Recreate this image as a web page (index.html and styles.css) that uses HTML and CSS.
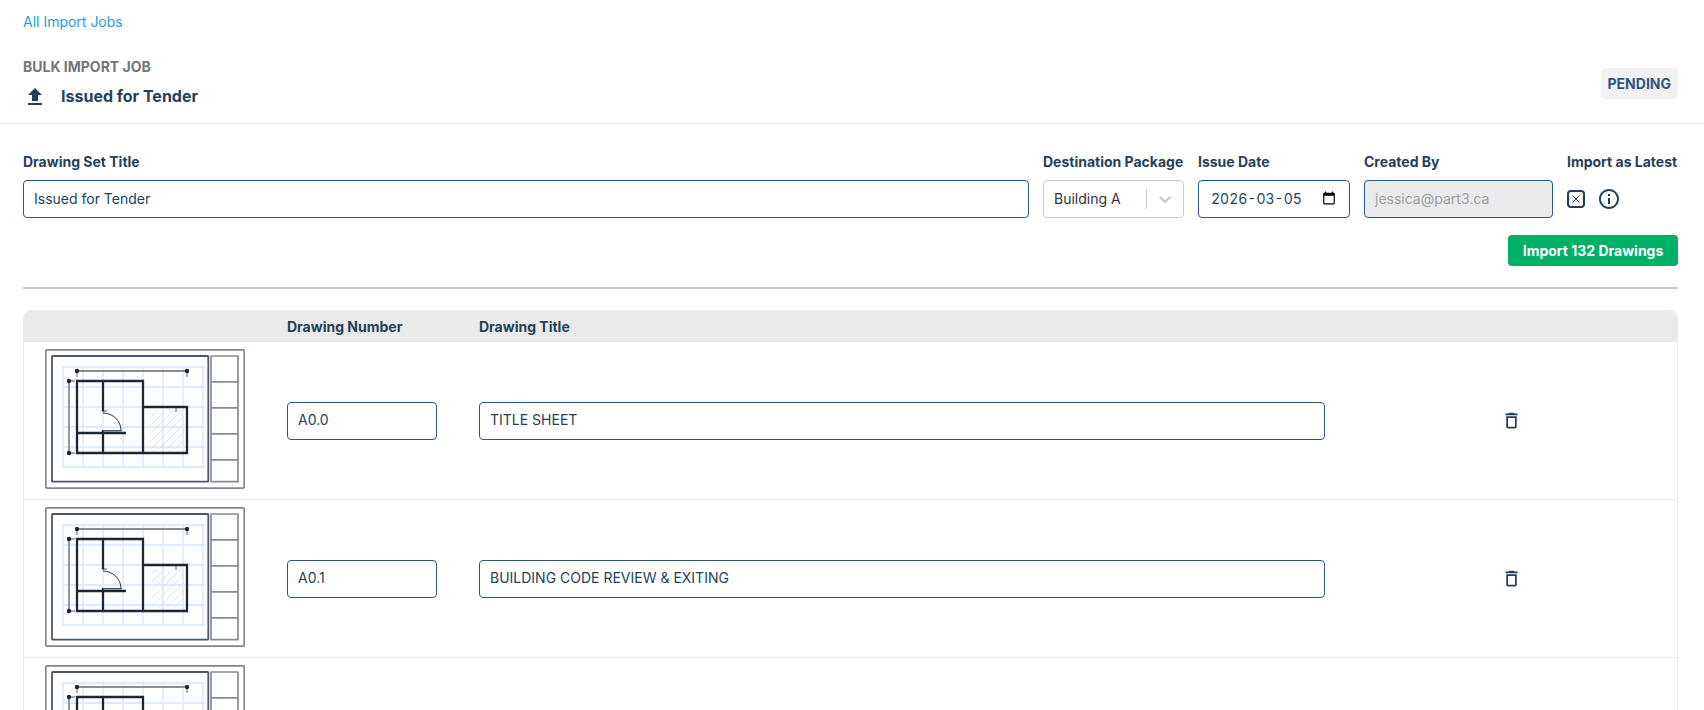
FILE: index.html
```html
<!DOCTYPE html>
<html lang="en">
<head>
<meta charset="utf-8">
<meta name="viewport" content="width=device-width, initial-scale=1">
<title>Issued for Tender</title>
<link rel="stylesheet" href="styles.css">
</head>
<body>
<svg class="sprite" aria-hidden="true">
  <defs>
    <symbol id="plan" viewBox="0 0 200 140">
      <g fill="none">
        <rect x="0.8" y="0.8" width="198.4" height="138.4" rx="1.5" stroke="#7f8590" stroke-width="1.7"/>
        <rect x="7" y="7" width="156.3" height="125.7" rx="0.6" stroke="#4f5563" stroke-width="1.8"/>
        <path d="M166 7h27v125.700h-27zM166 32.800h27M166 58.800h27M166 84.800h27M166 110.800h27" stroke="#878b93" stroke-width="1.7" stroke-linejoin="round"/>
        <path d="M18 17v102M38 17v102M58 17v102M78 17v102M98 17v102M118 17v102M138 17v102M158 17v102M17 18h143M17 38h143M17 58h143M17 78h143M17 98h143M17 118h143" stroke="#bfd7fb" stroke-opacity="0.5" stroke-width="1.8"/>
        <path d="M106 68l6-6M106 76l14-14M106 84l22-22M106 92l30-30M106 100l32-32M114 100l24-24M122 100l16-16M130 100l8-8" stroke="#d8d8d8" stroke-width="0.8"/>
        <path d="M32 22h110M24 32v72" stroke="#8b8f94" stroke-width="1.8"/>
        <path d="M32 22v6M142 22v6M24 32h6M24 104h6M131 58v5M58 62h4" stroke="#8b8f94" stroke-width="1.4"/>
        <path d="M32 32h66v26h44v46H32zM98 58v46M58 32v30.500M58 81v23M32 84h49" stroke="#1c2733" stroke-width="2.300"/>
        <path d="M58 81.700h18.500" stroke="#4d5660" stroke-width="1.6"/>
        <path d="M58 64c10 0 18 8 18 17.500" stroke="#2b3540" stroke-width="1"/>
      </g>
      <g fill="#1c2733">
        <circle cx="32" cy="22" r="2.2"/><circle cx="142" cy="22" r="2.2"/>
        <circle cx="24" cy="32" r="2.2"/><circle cx="24" cy="104" r="2.2"/>
      </g>
    </symbol>
    <symbol id="trash" viewBox="0 0 24 24">
      <path d="M6 19c0 1.100.900 2 2 2h8c1.100 0 2-.900 2-2V7H6zM8 9h8v10H8zm7.500-5-1-1h-5l-1 1H5v2h14V4z"/>
    </symbol>
  </defs>
</svg>

<nav class="crumbs"><a href="#">All Import Jobs</a></nav>

<header class="job-header">
  <div class="job-heading">
    <p class="eyebrow">BULK IMPORT JOB</p>
    <div class="job-name">
      <svg class="icon" viewBox="0 0 24 24" aria-hidden="true"><path d="M5 20h14v-2H5zm0-10h4v6h6v-6h4l-7-7z"/></svg>
      <h1>Issued for Tender</h1>
    </div>
  </div>
  <span class="status">PENDING</span>
</header>

<main class="content">
  <form class="job-form">
    <div class="fields">
      <div class="field field-grow">
        <label for="set-title">Drawing Set Title</label>
        <input class="input" id="set-title" type="text" value="Issued for Tender">
      </div>
      <div class="field field-package">
        <label for="package">Destination Package</label>
        <div class="select-wrap">
          <select id="package"><option>Building A</option></select>
          <span class="select-mark"><svg viewBox="0 0 20 20" aria-hidden="true"><path d="M4.516 7.548c0.436-0.446 1.043-0.481 1.576 0l3.908 3.747 3.908-3.747c0.533-0.481 1.141-0.446 1.574 0 0.436 0.445 0.408 1.197 0 1.615-0.406 0.418-4.695 4.502-4.695 4.502-0.217 0.223-0.502 0.335-0.787 0.335s-0.570-0.112-0.789-0.335c0 0-4.287-4.084-4.695-4.502s-0.436-1.170 0-1.615z"/></svg></span>
        </div>
      </div>
      <div class="field">
        <label for="issue-date">Issue Date</label>
        <div class="date-wrap">
          <input class="input input-date" id="issue-date" type="text" value="2026-03-05">
          <svg class="date-mark" viewBox="0 0 24 24" aria-hidden="true"><path d="M20 3h-1V1h-2v2H7V1H5v2H4c-1.100 0-2 .900-2 2v16c0 1.100.900 2 2 2h16c1.100 0 2-.900 2-2V5c0-1.100-.900-2-2-2zm0 18H4V8h16z"/></svg>
        </div>
      </div>
      <div class="field">
        <label for="created-by">Created By</label>
        <input class="input input-creator" id="created-by" type="text" value="jessica@part3.ca" disabled>
      </div>
      <div class="field field-latest">
        <label for="latest">Import as Latest</label>
        <div class="latest">
          <span class="check-wrap">
            <input id="latest" type="checkbox" checked>
            <svg class="check-mark" viewBox="0 0 8 8" aria-hidden="true"><path d="M0.500 0.500l7 7M7.500 0.500l-7 7"/></svg>
          </span>
          <svg class="icon" viewBox="0 0 24 24" aria-hidden="true"><path d="M11 7h2v2h-2zm0 4h2v6h-2zm1-9C6.480 2 2 6.480 2 12s4.480 10 10 10 10-4.480 10-10S17.520 2 12 2zm0 18c-4.410 0-8-3.590-8-8s3.590-8 8-8 8 3.590 8 8-3.590 8-8 8z"/></svg>
        </div>
      </div>
    </div>
    <button class="submit" type="button">Import 132 Drawings</button>
  </form>

  <hr class="rule">

  <div class="table-box">
    <table class="drawings">
      <thead>
        <tr><th class="col-image"></th><th class="col-number">Drawing Number</th><th>Drawing Title</th><th class="col-action"></th></tr>
      </thead>
      <tbody>
        <tr>
          <td class="image"><svg class="thumb" aria-hidden="true"><use href="#plan"/></svg></td>
          <td><input class="input" type="text" aria-label="Drawing Number" value="A0.0"></td>
          <td><input class="input" type="text" aria-label="Drawing Title" value="TITLE SHEET"></td>
          <td class="action"><button class="delete" type="button" aria-label="Delete"><svg aria-hidden="true"><use href="#trash"/></svg></button></td>
        </tr>
        <tr>
          <td class="image"><svg class="thumb" aria-hidden="true"><use href="#plan"/></svg></td>
          <td><input class="input" type="text" aria-label="Drawing Number" value="A0.1"></td>
          <td><input class="input" type="text" aria-label="Drawing Title" value="BUILDING CODE REVIEW &amp; EXITING"></td>
          <td class="action"><button class="delete" type="button" aria-label="Delete"><svg aria-hidden="true"><use href="#trash"/></svg></button></td>
        </tr>
        <tr>
          <td class="image"><svg class="thumb" aria-hidden="true"><use href="#plan"/></svg></td>
          <td><input class="input" type="text" aria-label="Drawing Number"></td>
          <td><input class="input" type="text" aria-label="Drawing Title"></td>
          <td class="action"><button class="delete" type="button" aria-label="Delete"><svg aria-hidden="true"><use href="#trash"/></svg></button></td>
        </tr>
      </tbody>
    </table>
  </div>
</main>
</body>
</html>
```
FILE: styles.css
```css
* { box-sizing: border-box; }

html { overflow: hidden; }

body {
  margin: 0;
  height: 100vh;
  overflow: hidden;
  background: #fff;
  color: #263f58;
  font: 14px/17px Inter, "Liberation Sans", sans-serif;
}

input, select, button { font: inherit; color: inherit; }

.sprite { position: absolute; width: 0; height: 0; }

.icon { display: block; width: 24px; height: 24px; fill: currentColor; }

.crumbs { padding: 13px 26px 15px 23px; }
.crumbs a { color: #1d9ed9; text-decoration: none; }

.job-header {
  display: flex;
  align-items: center;
  justify-content: space-between;
  padding: 13px 26px 14px 23px;
  border-bottom: 1px solid #eaeaea;
}
.job-heading { display: flex; flex-direction: column; gap: 10px; }
.eyebrow { margin: 0; color: #757575; font-weight: 700; }
.job-name { display: flex; align-items: flex-start; gap: 14px; }
.job-name h1 { margin: 0; font-size: 16px; line-height: 22px; font-weight: 700; }
.status {
  padding: 7px;
  border-radius: 4px;
  background: #f2f2f2;
  color: #2e5682;
  font-weight: 700;
}

.content { padding: 29px 26px 0 23px; }

.job-form { display: flex; flex-direction: column; gap: 17px; }
.fields { display: flex; gap: 14px; }
.field { display: flex; flex-direction: column; gap: 10px; }
.field-grow { flex: 1; }
.field-package { min-width: 141px; }
.field-latest { min-width: 111px; }
.field label { font-weight: 700; white-space: nowrap; }

.input {
  display: block;
  width: 100%;
  height: 38px;
  padding: 0 10px 2px;
  border: 1px solid #2e5682;
  border-radius: 4px;
  background: #fff;
}
.input:disabled { background: #eaeaea; color: #a0a0a0; }
.input-creator { width: 189px; }

.date-wrap { position: relative; width: 152px; }
.input-date { padding-left: 12px; font-variant-numeric: tabular-nums; }
.date-mark { position: absolute; top: 11px; right: 14px; width: 14px; height: 14px; fill: #000; }

.select-wrap { position: relative; }
.select-wrap select {
  display: block;
  width: 100%;
  height: 38px;
  padding: 0 38px 2px 10px;
  border: 1px solid #ccc;
  border-radius: 4px;
  background: #fff;
  color: #333;
  appearance: none;
}
.select-mark {
  position: absolute;
  top: 9px;
  right: 1px;
  display: flex;
  padding: 0 8px;
  border-left: 1px solid #ccc;
  pointer-events: none;
}
.select-mark svg { width: 20px; height: 20px; fill: #ccc; }

.latest { display: flex; align-items: center; gap: 12px; height: 37px; }
.check-wrap { position: relative; width: 18px; height: 18px; }
.check-wrap input {
  display: block;
  width: 18px;
  height: 18px;
  margin: 0;
  border: 2px solid #263f58;
  border-radius: 4px;
  background: #fff;
  appearance: none;
}
.check-mark {
  position: absolute;
  top: 5px;
  left: 5px;
  width: 8px;
  height: 8px;
  fill: none;
  stroke: #263f58;
  pointer-events: none;
}

.submit {
  align-self: flex-end;
  min-width: 170px;
  padding: 7px 14px;
  border: 0;
  border-radius: 4px;
  background: #00b067;
  color: #fff;
  font-weight: 700;
}

.rule { height: 2px; margin: 21px 0; border: 0; background: #ccc; }

.table-box {
  overflow: hidden;
  border: 1px solid #eaeaea;
  border-radius: 8px;
}
.drawings { width: 100%; border-collapse: collapse; table-layout: fixed; }
.drawings th {
  height: 31px;
  padding: 0 21px;
  background: #eaeaea;
  text-align: left;
  font-weight: 700;
}
.drawings td { padding: 0 21px; border-bottom: 1px solid #eaeaea; }
.drawings .image { padding: 7px 21px 10px; }
.col-image { width: 242px; }
.col-number { width: 192px; }
.drawings .col-action { width: 20%; }
.thumb { display: block; width: 200px; height: 140px; }
.action { text-align: center; }
.delete { padding: 0; border: 0; background: none; vertical-align: middle; }
.delete svg { display: block; width: 21px; height: 21px; fill: currentColor; }
```
